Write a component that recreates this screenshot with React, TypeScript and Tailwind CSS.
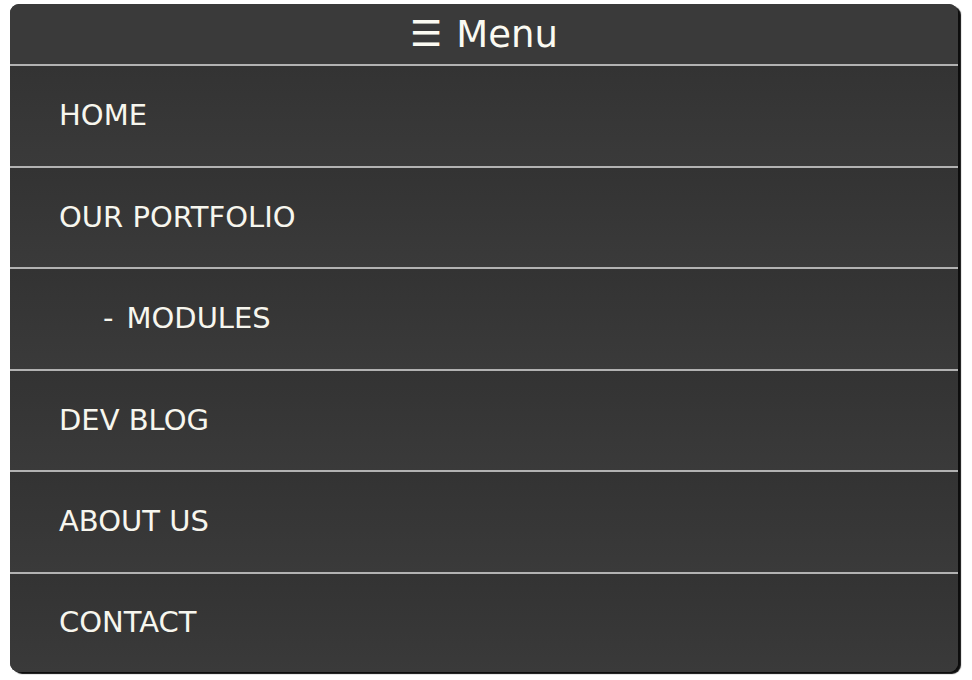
import React from "react";

const ITEMS: { label: string; sub?: boolean }[] = [
  { label: "HOME" },
  { label: "OUR PORTFOLIO" },
  { label: "MODULES", sub: true },
  { label: "DEV BLOG" },
  { label: "ABOUT US" },
  { label: "CONTACT" },
];

export default function App() {
  return (
    <div className="w-[972px] h-[680px] bg-white pt-[4px] pl-[10px]" style={{ fontFamily: '"DejaVu Sans", Verdana, sans-serif' }}>
      <div className="w-[948px] rounded-[9px] bg-[#383838] overflow-hidden shadow-[3px_2px_1px_rgba(0,0,0,0.95)]">
        {/* Header */}
        <div className="h-[62px] flex items-center justify-center bg-[#3a3a3a] border-b-2 border-[#b2b2b2] text-[#fbfaf2] text-[37px] leading-none">
          <span className="mr-[14px] text-[36px]">☰</span>
          <span>Menu</span>
        </div>

        {/* Links */}
        {ITEMS.map((item, i) => (
          <div
            key={item.label}
            className={
              "flex items-center text-[29px] leading-none text-[#f7f6ee] bg-gradient-to-b from-[#333333] to-[#3a3a3a] " +
              (i < ITEMS.length - 1 ? "h-[101.5px] border-b-2 border-[#b2b2b2] " : "h-[98.5px] ") +
              (item.sub ? "pl-[93px]" : "pl-[49px]")
            }
          >
            {item.sub ? (
              <>
                <span className="mr-[13px]">-</span>
                <span>{item.label}</span>
              </>
            ) : (
              item.label
            )}
          </div>
        ))}
      </div>
    </div>
  );
}
